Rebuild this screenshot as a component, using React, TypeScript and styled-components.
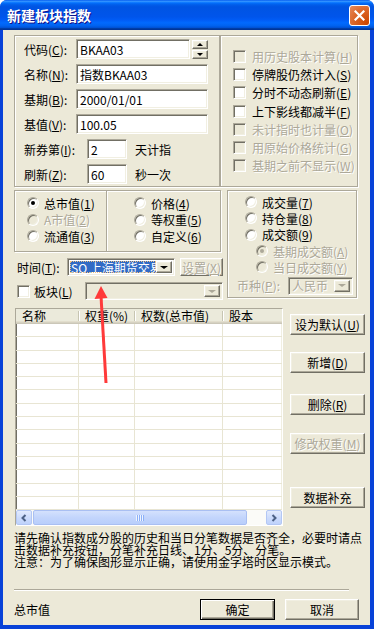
import React from 'react';
import styled, { createGlobalStyle, css } from 'styled-components';

const GlobalStyle = createGlobalStyle`
  html, body {
    margin: 0;
    padding: 0;
    background: #ffffff;
  }
  body {
    font-family: 'Noto Sans CJK SC', 'DejaVu Sans', sans-serif;
    font-size: 12px;
    color: #000000;
  }
  * {
    box-sizing: border-box;
  }
`;

const sunken = css`
  border: 1px solid;
  border-color: #aca899 #ffffff #ffffff #aca899;
  box-shadow: inset 1px 1px 0 #716f64, inset -1px -1px 0 #f1efe2;
`;

const raised = css`
  border: 1px solid;
  border-color: #ffffff #716f64 #716f64 #ffffff;
  box-shadow: inset -1px -1px 0 #aca899, inset 1px 1px 0 #f1efe2;
`;

const etched = css`
  border: 1px solid #aca899;
  box-shadow: inset 1px 1px 0 #ffffff, 1px 1px 0 #ffffff;
`;

const disabledText = css`
  color: #aca899;
  text-shadow: 1px 1px 0 #ffffff;
`;

const checkOptions = [
  { text: '用历史股本计算', key: 'H', disabled: true },
  { text: '停牌股仍然计入', key: 'S', disabled: false },
  { text: '分时不动态刷新', key: 'E', disabled: false },
  { text: '上下影线都减半', key: 'F', disabled: false },
  { text: '未计指时也计量', key: 'O', disabled: true },
  { text: '用原始价格统计', key: 'G', disabled: true },
  { text: '基期之前不显示', key: 'W', disabled: true },
];

const rows = Array.from({ length: 14 }, (_, i) => i);

const App = () => {
  return (
    <>
      <GlobalStyle />
      <Window>
        <TitleBar>
          <Title>新建板块指数</Title>
          <CloseButton>
            <svg width="11" height="11" viewBox="0 0 11 11">
              <path d="M1.5 1.5 L9.5 9.5 M9.5 1.5 L1.5 9.5" stroke="#ffffff" strokeWidth="2.2" strokeLinecap="square" />
            </svg>
          </CloseButton>
        </TitleBar>

        <Body>
          <TopRow>
            <FormBox>
              <FormRow>
                <FieldLabel $w={52}>代码(<Acc>C</Acc>):</FieldLabel>
                <TextBox $w={114}>BKAA03</TextBox>
                <Spinner>
                  <SpinButton><Tri $dir="up" $size={3} $color="#000" /></SpinButton>
                  <SpinButton><Tri $dir="down" $size={3} $color="#000" /></SpinButton>
                </Spinner>
              </FormRow>
              <FormRow>
                <FieldLabel $w={52}>名称(<Acc>N</Acc>):</FieldLabel>
                <TextBox $w={132}>指数BKAA03</TextBox>
              </FormRow>
              <FormRow>
                <FieldLabel $w={52}>基期(<Acc>B</Acc>):</FieldLabel>
                <TextBox $w={132}>2000/01/01</TextBox>
              </FormRow>
              <FormRow>
                <FieldLabel $w={52}>基值(<Acc>V</Acc>):</FieldLabel>
                <TextBox $w={132}>100.05</TextBox>
              </FormRow>
              <FormRow>
                <FieldLabel $w={63}>新券第(<Acc>I</Acc>):</FieldLabel>
                <TextBox $w={40}>2</TextBox>
                <Suffix>天计指</Suffix>
              </FormRow>
              <FormRow>
                <FieldLabel $w={63}>刷新(<Acc>Z</Acc>):</FieldLabel>
                <TextBox $w={40}>60</TextBox>
                <Suffix>秒一次</Suffix>
              </FormRow>
            </FormBox>

            <OptionBox>
              {checkOptions.map((o) => (
                <CheckRow key={o.key} $disabled={o.disabled}>
                  <CheckBox $disabled={o.disabled} />
                  <span>
                    {o.text}(<Acc>{o.key}</Acc>)
                  </span>
                </CheckRow>
              ))}
            </OptionBox>
          </TopRow>

          <MidRow>
            <LeftCol>
              <RadioBox>
                <RadioCol $w={91} $pl={12}>
                  <RadioRow>
                    <Radio $checked />
                    <span>总市值(<Acc>1</Acc>)</span>
                  </RadioRow>
                  <RadioRow $disabled>
                    <Radio $disabled />
                    <span>A市值(<Acc>2</Acc>)</span>
                  </RadioRow>
                  <RadioRow>
                    <Radio />
                    <span>流通值(<Acc>3</Acc>)</span>
                  </RadioRow>
                </RadioCol>
                <RadioCol $pl={27} $divider>
                  <RadioRow>
                    <Radio />
                    <span>价格(<Acc>4</Acc>)</span>
                  </RadioRow>
                  <RadioRow>
                    <Radio />
                    <span>等权重(<Acc>5</Acc>)</span>
                  </RadioRow>
                  <RadioRow>
                    <Radio />
                    <span>自定义(<Acc>6</Acc>)</span>
                  </RadioRow>
                </RadioCol>
              </RadioBox>

              <TimeRow>
                <InlineLabel $w={50}>时间(<Acc>T</Acc>):</InlineLabel>
                <Combo $w={108}>
                  <ComboText $selected>SQ 上海期货交易</ComboText>
                  <ComboButton>
                    <Tri $dir="down" $size={4} $color="#000" />
                  </ComboButton>
                </Combo>
                <SmallButton disabled>设置(<Acc>X</Acc>)</SmallButton>
              </TimeRow>

              <BlockRow>
                <CheckBox />
                <InlineLabel $w={51} $ml={4}>板块(<Acc>L</Acc>)</InlineLabel>
                <Combo $w={138} $disabled>
                  <ComboText />
                  <ComboButton>
                    <Tri $dir="down" $size={4} $color="#aca899" />
                  </ComboButton>
                </Combo>
              </BlockRow>
            </LeftCol>

            <VolumeBox>
              <VolRadioRow $indent={8}>
                <Radio />
                <span>成交量(<Acc>7</Acc>)</span>
              </VolRadioRow>
              <VolRadioRow $indent={8}>
                <Radio />
                <span>持仓量(<Acc>8</Acc>)</span>
              </VolRadioRow>
              <VolRadioRow $indent={8}>
                <Radio />
                <span>成交额(<Acc>9</Acc>)</span>
              </VolRadioRow>
              <VolRadioRow $indent={19} $disabled>
                <Radio $checked $disabled />
                <span>基期成交额(<Acc>A</Acc>)</span>
              </VolRadioRow>
              <VolRadioRow $indent={19} $disabled>
                <Radio $disabled />
                <span>当日成交额(<Acc>Y</Acc>)</span>
              </VolRadioRow>
              <CurrencyRow>
                <InlineLabel $w={51} $disabled>币种(<Acc>P</Acc>):</InlineLabel>
                <Combo $w={65} $disabled>
                  <ComboText $disabled>人民币</ComboText>
                  <ComboButton>
                    <Tri $dir="down" $size={4} $color="#aca899" />
                  </ComboButton>
                </Combo>
              </CurrencyRow>
            </VolumeBox>
          </MidRow>

          <ListRow>
            <ListView>
              <ListHeader>
                <HeaderCell $w={63}>名称</HeaderCell>
                <HeaderCell $w={56}>权重(%)</HeaderCell>
                <HeaderCell $w={88}>权数(总市值)</HeaderCell>
                <HeaderCell $w={80}>股本</HeaderCell>
              </ListHeader>
              <ListBody>
                {rows.map((r) => (
                  <GridRow key={r}>
                    <GridCell $w={63} />
                    <GridCell $w={56} />
                    <GridCell $w={88} />
                    <GridCell $w={80} />
                  </GridRow>
                ))}
              </ListBody>
              <HScroll>
                <ScrollArrow>
                  <svg width="8" height="8" viewBox="0 0 8 8">
                    <path d="M5.5 1 L2.5 4 L5.5 7" fill="none" stroke="#4d6185" strokeWidth="2" />
                  </svg>
                </ScrollArrow>
                <ScrollThumb>
                  <svg width="8" height="6" viewBox="0 0 8 6">
                    <path d="M0.5 0 V6 M2.5 0 V6 M4.5 0 V6 M6.5 0 V6" stroke="#eef4fe" strokeWidth="1" />
                    <path d="M1.5 0 V6 M3.5 0 V6 M5.5 0 V6 M7.5 0 V6" stroke="#8cb0f8" strokeWidth="1" />
                  </svg>
                </ScrollThumb>
                <ScrollTrack />
                <ScrollArrow>
                  <svg width="8" height="8" viewBox="0 0 8 8">
                    <path d="M2.5 1 L5.5 4 L2.5 7" fill="none" stroke="#4d6185" strokeWidth="2" />
                  </svg>
                </ScrollArrow>
              </HScroll>
            </ListView>

            <ButtonCol>
              <PushButton $mt={6}>设为默认(<Acc>U</Acc>)</PushButton>
              <PushButton $mt={17}>新增(<Acc>D</Acc>)</PushButton>
              <PushButton $mt={21}>删除(<Acc>R</Acc>)</PushButton>
              <PushButton $mt={18} disabled>修改权重(<Acc>M</Acc>)</PushButton>
              <PushButton $mt={33}>数据补充</PushButton>
            </ButtonCol>
          </ListRow>

          <Hint>
            请先确认指数成分股的历史和当日分笔数据是否齐全，必要时请点
            <br />
            击数据补充按钮，分笔补充日线、1分、5分、分笔。
            <br />
            注意：为了确保图形显示正确，请使用金字塔时区显示模式。
          </Hint>

          <Separator />

          <Footer>
            <FooterLabel>总市值</FooterLabel>
            <PushButton $w={75} $default>确定</PushButton>
            <PushButton $w={74} $ml={10}>取消</PushButton>
          </Footer>
        </Body>

        <Annotation width="374" height="629" viewBox="0 0 374 629">
          <line x1="106" y1="383" x2="101" y2="296" stroke="#ff3a3a" strokeWidth="3" />
          <polygon points="101,286 94.5,299 107.5,298" fill="#ff3a3a" />
        </Annotation>
      </Window>
    </>
  );
};

export default App;

const Window = styled.div`
  position: relative;
  width: 374px;
  height: 629px;
  display: flex;
  flex-direction: column;
  background: #0842d8;
  border-radius: 7px 7px 0 0;
  overflow: hidden;
`;

const TitleBar = styled.div`
  height: 30px;
  display: flex;
  align-items: center;
  justify-content: space-between;
  padding: 0 4px 1px 7px;
  background: linear-gradient(
    to bottom,
    #0058ee 0%,
    #3593ff 4%,
    #288eff 6%,
    #127dff 8%,
    #036ffc 10%,
    #0262ee 14%,
    #0057e5 20%,
    #0054e3 24%,
    #0055eb 56%,
    #005bf5 66%,
    #026afe 76%,
    #0062ef 86%,
    #0052d6 92%,
    #0040ab 94%,
    #003092 100%
  );
`;

const Title = styled.span`
  color: #ffffff;
  font-size: 14px;
  font-weight: bold;
  text-shadow: 1px 1px 0 #0f1089;
`;

const CloseButton = styled.div`
  width: 21px;
  height: 21px;
  margin-top: 1px;
  display: flex;
  align-items: center;
  justify-content: center;
  border: 1px solid #ffffff;
  border-radius: 3px;
  background: radial-gradient(circle at 90% 90%, #cc4600 0%, #dc6527 55%, #e58a5c 100%);
`;

const Body = styled.div`
  flex: 1;
  margin: 0 4px 4px 3px;
  padding: 5px 0 0 11px;
  display: flex;
  flex-direction: column;
  background: #ece9d8;
`;

const Acc = styled.span`
  text-decoration: underline;
`;

const Tri = styled.span<{ $dir: 'up' | 'down'; $size: number; $color: string }>`
  width: 0;
  height: 0;
  border-left: ${({ $size }) => $size}px solid transparent;
  border-right: ${({ $size }) => $size}px solid transparent;
  ${({ $dir, $size, $color }) =>
    $dir === 'up'
      ? `border-bottom: ${Math.ceil($size * 0.75)}px solid ${$color};`
      : `border-top: ${Math.ceil($size * 0.75)}px solid ${$color};`}
`;

const TopRow = styled.div`
  display: flex;
  height: 152px;
`;

const FormBox = styled.div`
  ${etched}
  width: 206px;
  height: 100%;
  padding: 3px 0 0 9px;
  display: flex;
  flex-direction: column;
  gap: 5px;
`;

const FormRow = styled.div`
  display: flex;
  align-items: center;
  height: 20px;
`;

const FieldLabel = styled.span<{ $w: number }>`
  width: ${({ $w }) => $w}px;
  white-space: nowrap;
`;

const TextBox = styled.div<{ $w: number }>`
  ${sunken}
  width: ${({ $w }) => $w}px;
  height: 20px;
  padding: 0 3px;
  display: flex;
  align-items: center;
  background: #ffffff;
  white-space: nowrap;
`;

const Spinner = styled.div`
  margin-left: 2px;
  display: flex;
  flex-direction: column;
  gap: 1px;
`;

const SpinButton = styled.div`
  ${raised}
  width: 16px;
  height: 9px;
  display: flex;
  align-items: center;
  justify-content: center;
  background: #ece9d8;
`;

const Suffix = styled.span`
  margin-left: 8px;
`;

const OptionBox = styled.div`
  ${etched}
  width: 138px;
  height: 100%;
  padding: 11px 0 0 12px;
  display: flex;
  flex-direction: column;
`;

const CheckRow = styled.div<{ $disabled?: boolean }>`
  display: flex;
  align-items: center;
  gap: 6px;
  height: 18.3px;
  white-space: nowrap;
  ${({ $disabled }) => $disabled && disabledText}
`;

const CheckBox = styled.span<{ $disabled?: boolean }>`
  ${sunken}
  width: 13px;
  height: 13px;
  flex-shrink: 0;
  background: ${({ $disabled }) => ($disabled ? '#ece9d8' : '#ffffff')};
`;

const MidRow = styled.div`
  display: flex;
  align-items: flex-start;
  margin-top: 3px;
`;

const LeftCol = styled.div`
  width: 209px;
  display: flex;
  flex-direction: column;
`;

const RadioBox = styled.div`
  ${etched}
  width: 207px;
  height: 62px;
  display: flex;
`;

const RadioCol = styled.div<{ $w?: number; $pl: number; $divider?: boolean }>`
  ${({ $w }) => ($w ? `width: ${$w}px;` : 'flex: 1;')}
  padding: 4px 0 0 ${({ $pl }) => $pl}px;
  display: flex;
  flex-direction: column;
  ${({ $divider }) =>
    $divider &&
    css`
      border-left: 1px solid #aca899;
      box-shadow: inset 1px 0 0 #ffffff;
    `}
`;

const RadioRow = styled.div<{ $disabled?: boolean }>`
  display: flex;
  align-items: center;
  gap: 5px;
  height: 16.5px;
  white-space: nowrap;
  ${({ $disabled }) => $disabled && disabledText}
`;

const Radio = styled.span<{ $checked?: boolean; $disabled?: boolean }>`
  position: relative;
  width: 12px;
  height: 12px;
  flex-shrink: 0;
  border-radius: 50%;
  border: 1px solid;
  border-color: #aca899 #ffffff #ffffff #aca899;
  box-shadow: inset 1px 1px 0 #716f64, inset -1px -1px 0 #f1efe2;
  background: ${({ $disabled }) => ($disabled ? '#ece9d8' : '#ffffff')};

  &::after {
    content: '';
    display: ${({ $checked }) => ($checked ? 'block' : 'none')};
    position: absolute;
    left: 3px;
    top: 3px;
    width: 4px;
    height: 4px;
    border-radius: 50%;
    background: ${({ $disabled }) => ($disabled ? '#aca899' : '#000000')};
  }
`;

const TimeRow = styled.div`
  display: flex;
  align-items: center;
  height: 18px;
  margin-top: 6px;
  padding-left: 3px;
`;

const BlockRow = styled.div`
  display: flex;
  align-items: center;
  height: 18px;
  margin-top: 6px;
  padding-left: 3px;
`;

const InlineLabel = styled.span<{ $w: number; $ml?: number; $disabled?: boolean }>`
  width: ${({ $w }) => $w}px;
  margin-left: ${({ $ml }) => $ml || 0}px;
  white-space: nowrap;
  ${({ $disabled }) => $disabled && disabledText}
`;

const Combo = styled.div<{ $w: number; $disabled?: boolean }>`
  ${sunken}
  width: ${({ $w }) => $w}px;
  height: 18px;
  padding: 2px;
  display: flex;
  align-items: stretch;
  background: ${({ $disabled }) => ($disabled ? '#ece9d8' : '#ffffff')};
`;

const ComboText = styled.div<{ $selected?: boolean; $disabled?: boolean }>`
  flex: 1;
  min-width: 0;
  padding: 0 1px;
  display: flex;
  align-items: center;
  white-space: nowrap;
  ${({ $selected }) =>
    $selected &&
    css`
      background: #316ac5;
      color: #ffffff;
      outline: 1px dotted #f0c080;
      outline-offset: -1px;
    `}
  ${({ $disabled }) => $disabled && disabledText}
`;

const ComboButton = styled.div`
  ${raised}
  position: relative;
  width: 16px;
  flex-shrink: 0;
  display: flex;
  align-items: center;
  justify-content: center;
  background: #ece9d8;
`;

const SmallButton = styled.button`
  ${raised}
  width: 43px;
  height: 18px;
  margin-left: 5px;
  padding: 0;
  font: inherit;
  background: #ece9d8;
  white-space: nowrap;
  ${disabledText}
`;

const VolumeBox = styled.div`
  ${etched}
  width: 130px;
  height: 108px;
  margin-left: 4px;
  padding: 3px 0 0 9px;
  display: flex;
  flex-direction: column;
`;

const VolRadioRow = styled(RadioRow)<{ $indent: number }>`
  height: 16.3px;
  padding-left: ${({ $indent }) => $indent}px;
`;

const CurrencyRow = styled.div`
  display: flex;
  align-items: center;
  margin-top: 2px;
  height: 17px;
`;

const ListRow = styled.div`
  display: flex;
  align-items: flex-start;
  margin-top: 8px;
`;

const ListView = styled.div`
  ${sunken}
  width: 268px;
  height: 218px;
  margin-left: 1px;
  display: flex;
  flex-direction: column;
  background: #ffffff;
  overflow: hidden;
`;

const ListHeader = styled.div`
  display: flex;
  height: 15px;
  flex-shrink: 0;
  background: #ebeadb;
  box-shadow: inset 0 -1px 0 #cbc7b8, inset 0 -2px 0 #d6d2c2, inset 0 -3px 0 #e2decd;
`;

const HeaderCell = styled.div<{ $w: number }>`
  position: relative;
  width: ${({ $w }) => $w}px;
  flex-shrink: 0;
  padding-left: 6px;
  line-height: 13px;
  white-space: nowrap;

  &::after {
    content: '';
    position: absolute;
    right: 0;
    top: 2px;
    width: 1px;
    height: 10px;
    background: #c7c5b2;
    box-shadow: 1px 0 0 #ffffff;
  }
`;

const ListBody = styled.div`
  flex: 1;
  overflow: hidden;
`;

const GridRow = styled.div`
  display: flex;
  height: 13.3px;
  border-bottom: 1px solid #e8e5d3;
`;

const GridCell = styled.div<{ $w: number }>`
  width: ${({ $w }) => $w}px;
  flex-shrink: 0;
  border-right: 1px solid #e8e5d3;
`;

const HScroll = styled.div`
  display: flex;
  height: 15px;
  flex-shrink: 0;
  background: #fbfbf8;
`;

const scrollPart = css`
  display: flex;
  align-items: center;
  justify-content: center;
  border: 1px solid #b3c7f4;
  border-radius: 2px;
  background: linear-gradient(to bottom, #e3ebfd 0%, #cddcfc 50%, #bfd2fb 100%);
`;

const ScrollArrow = styled.div`
  ${scrollPart}
  width: 16px;
`;

const ScrollThumb = styled.div`
  ${scrollPart}
  width: 214px;
  margin-left: 1px;
  border-color: #a9bff2;
  background: linear-gradient(to bottom, #d4e1fd 0%, #c3d5fc 50%, #b8cefb 100%);
`;

const ScrollTrack = styled.div`
  flex: 1;
`;

const ButtonCol = styled.div`
  width: 75px;
  margin-left: 7px;
  display: flex;
  flex-direction: column;
`;

const PushButton = styled.button<{ $mt?: number; $ml?: number; $w?: number; $default?: boolean }>`
  ${raised}
  width: ${({ $w }) => ($w ? `${$w}px` : '100%')};
  height: 21px;
  margin: ${({ $mt }) => $mt || 0}px 0 0 ${({ $ml }) => $ml || 0}px;
  padding: 0;
  font: inherit;
  color: #000000;
  background: #ece9d8;
  white-space: nowrap;
  ${({ $default }) =>
    $default &&
    css`
      border-color: #000000;
      box-shadow: inset 1px 1px 0 #ffffff, inset -1px -1px 0 #716f64, inset -2px -2px 0 #aca899;
    `}
  &:disabled {
    ${disabledText}
  }
`;

const Hint = styled.div`
  margin-top: 6px;
  line-height: 12px;
  white-space: nowrap;
`;

const Separator = styled.div`
  width: 335px;
  height: 2px;
  margin-top: 21px;
  border-top: 1px solid #aca899;
  border-bottom: 1px solid #ffffff;
`;

const Footer = styled.div`
  display: flex;
  align-items: center;
  height: 21px;
  margin-top: 8px;
`;

const FooterLabel = styled.span`
  width: 186px;
`;

const Annotation = styled.svg`
  position: absolute;
  left: 0;
  top: 0;
  pointer-events: none;
`;
